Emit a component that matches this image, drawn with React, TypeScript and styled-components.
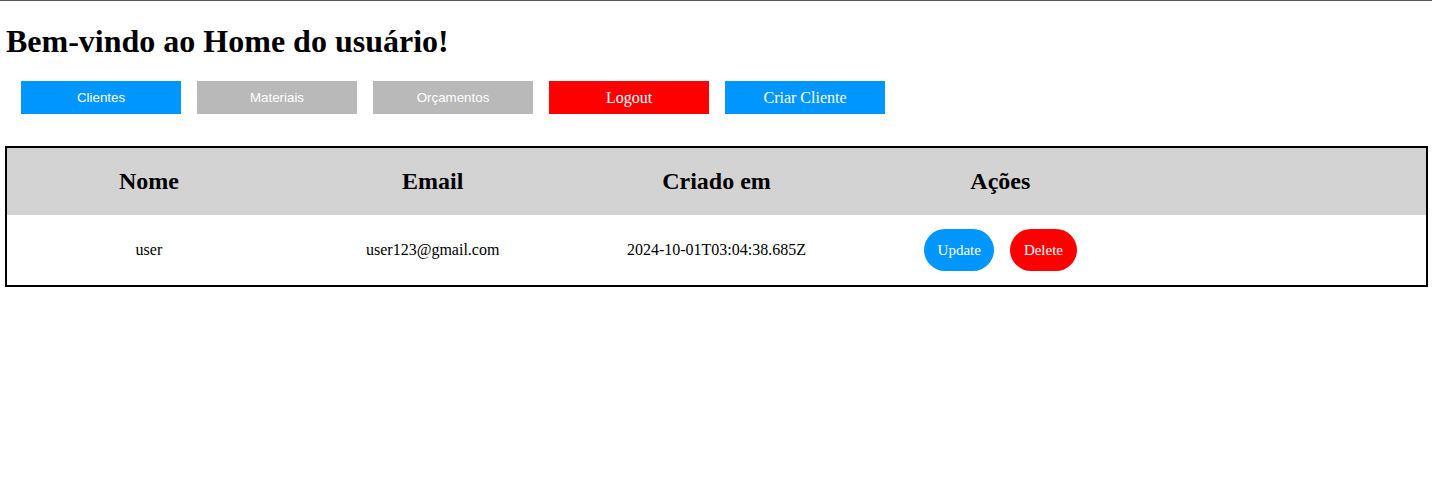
import React from "react";
import styled, { createGlobalStyle } from "styled-components";

const GlobalStyle = createGlobalStyle`
  body {
    margin: 0;
    background: #fff;
    font-family: "Liberation Serif", "Times New Roman", serif;
  }
`;

type Client = { id: number; nome: string; email: string; criadoEm: string };

const clients: Client[] = [
  { id: 1, nome: "user", email: "user123@gmail.com", criadoEm: "2024-10-01T03:04:38.685Z" },
];

const App: React.FC = () => {
  return (
    <Page>
      <GlobalStyle />
      <Title>Bem-vindo ao Home do usuário!</Title>

      <Nav>
        <NavButton $bg="#0096ff" $sans>Clientes</NavButton>
        <NavButton $bg="#b9b9b9" $sans>Materiais</NavButton>
        <NavButton $bg="#b9b9b9" $sans>Orçamentos</NavButton>
        <NavButton $bg="#ff0000">Logout</NavButton>
        <NavButton $bg="#0096ff">Criar Cliente</NavButton>
      </Nav>

      <Table>
        <thead>
          <tr>
            <Th>Nome</Th>
            <Th>Email</Th>
            <Th>Criado em</Th>
            <Th>Ações</Th>
            <Th />
          </tr>
        </thead>
        <tbody>
          {clients.map((c) => (
            <tr key={c.id}>
              <Td>{c.nome}</Td>
              <Td>{c.email}</Td>
              <Td>{c.criadoEm}</Td>
              <Td>
                <Actions>
                  <PillButton $bg="#0096ff">Update</PillButton>
                  <PillButton $bg="#ff0000">Delete</PillButton>
                </Actions>
              </Td>
              <Td />
            </tr>
          ))}
        </tbody>
      </Table>
    </Page>
  );
};

export default App;

// styles

const Page = styled.div`
  border-top: 1px solid #555;
  padding: 0 4px 0 5px;
`;

const Title = styled.h1`
  font-size: 32px;
  font-weight: bold;
  margin: 22px 0 21px 1px;
  color: #000;
`;

const Nav = styled.div`
  display: flex;
  gap: 16px;
  padding-left: 16px;
`;

const NavButton = styled.button<{ $bg: string; $sans?: boolean }>`
  width: 160px;
  height: 33px;
  border: none;
  padding: 0;
  background-color: ${(p) => p.$bg};
  color: #fff;
  font-family: ${(p) =>
    p.$sans ? `"Liberation Sans", Arial, sans-serif` : `"Liberation Serif", "Times New Roman", serif`};
  font-size: ${(p) => (p.$sans ? "13.33px" : "16px")};
  cursor: pointer;
`;

const Table = styled.table`
  width: 100%;
  margin-top: 32px;
  border: 2px solid #000;
  border-spacing: 0;
  table-layout: fixed;
`;

const Th = styled.th`
  height: 67px;
  padding: 0;
  background-color: #d3d3d3;
  font-size: 24px;
  font-weight: bold;
  text-align: center;
`;

const Td = styled.td`
  height: 70px;
  padding: 0;
  font-size: 16px;
  text-align: center;
`;

const Actions = styled.div`
  display: flex;
  justify-content: center;
  gap: 16px;
`;

const PillButton = styled.button<{ $bg: string }>`
  height: 42px;
  padding: 0 13.5px;
  border: none;
  border-radius: 21px;
  background-color: ${(p) => p.$bg};
  color: #fff;
  font-family: "Liberation Serif", "Times New Roman", serif;
  font-size: 15px;
  cursor: pointer;
`;
